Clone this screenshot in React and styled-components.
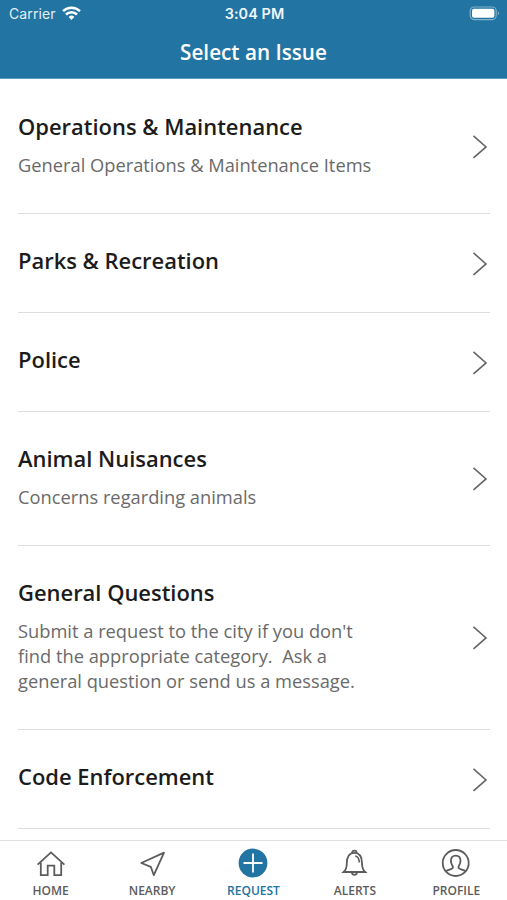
import React from 'react';
import styled, { createGlobalStyle } from 'styled-components';

const GlobalStyle = createGlobalStyle`
  * {
    box-sizing: border-box;
  }

  body {
    margin: 0;
    background: #fff;
    font-family: 'Open Sans', 'Noto Sans', sans-serif;
  }
`;

const Screen = styled.div`
  width: 507px;
  height: 900px;
  display: flex;
  flex-direction: column;
  overflow: hidden;
  background: #fff;
`;

const Header = styled.header`
  height: 79px;
  flex-shrink: 0;
  background: #2274a2;
  border-bottom: 1px solid #5d9cc1;
  color: #fff;
`;

const StatusBar = styled.div`
  height: 27px;
  padding: 0 7px 0 9px;
  display: grid;
  grid-template-columns: 1fr auto 1fr;
  align-items: center;
  font-family: Inter, 'Liberation Sans', sans-serif;
  font-size: 14px;
  line-height: 27px;
`;

const Carrier = styled.div`
  display: flex;
  align-items: center;
  gap: 6px;
  letter-spacing: 0.1px;
  color: #e3eff6;
`;

const Clock = styled.div`
  font-size: 14.4px;
  font-weight: 600;
  letter-spacing: 0.1px;
  color: #f0f7fb;
`;

const Battery = styled.div`
  display: flex;
  justify-content: flex-end;
`;

const HeaderTitle = styled.h1`
  margin: 0;
  padding-top: 10px;
  font-size: 20.7px;
  line-height: 30px;
  font-weight: 600;
  text-align: center;
`;

const IssueList = styled.main`
  flex: 1;
  min-height: 0;
  overflow: hidden;
  padding: 1px 17px 0 18px;
`;

const IssueRow = styled.div`
  display: flex;
  align-items: center;
  justify-content: space-between;
  padding: 32px 2px 31px 0;
  border-bottom: 1px solid #dedede;
`;

const IssueText = styled.div`
  padding-bottom: 5px;
`;

const IssueName = styled.h2`
  margin: 0;
  font-size: 21.95px;
  line-height: 30px;
  font-weight: 600;
  color: #1c1c1c;
`;

const IssueDescription = styled.p`
  width: 360px;
  margin: 10px 0 0;
  font-size: 18.3px;
  line-height: 25px;
  color: #6a6a6a;
  white-space: pre-line;
`;

const TabBar = styled.nav`
  height: 60px;
  flex-shrink: 0;
  display: grid;
  grid-template-columns: repeat(5, 1fr);
  border-top: 1px solid #e0e0e0;
  background: #fff;
`;

const Tab = styled.div`
  display: flex;
  flex-direction: column;
  align-items: center;
  padding-top: 5.5px;
  color: ${(props) => (props.$active ? '#2274a2' : '#5c5c5c')};
`;

const TabLabel = styled.span`
  margin-top: 4.5px;
  font-size: 12px;
  line-height: 16px;
  font-weight: 600;
`;

const TabIcon = styled.svg`
  width: 32px;
  height: 32px;
  fill: none;
  stroke: currentColor;
  stroke-width: 1.8;
`;

const WifiIcon = () => (
  <svg width="19" height="15" viewBox="0 0 19 15" fill="none" stroke="#fff" strokeWidth="2.5">
    <path d="M1 5.2a12.2 12.2 0 0 1 17 0" />
    <path d="M4 8.5a7.8 7.8 0 0 1 11 0" />
    <path d="M9.5 13.9 6.6 11a4.1 4.1 0 0 1 5.8 0z" fill="#fff" stroke="none" />
  </svg>
);

const BatteryIcon = () => (
  <svg width="31" height="15" viewBox="0 0 31 15">
    <rect x="1.2" y="1" width="26" height="12.6" rx="4" fill="none" stroke="#82b1cb" strokeWidth="1.2" />
    <rect x="3" y="2.8" width="22.4" height="9" rx="2" fill="#fff" />
    <path d="M28.8 5.3c1.7.7 1.7 3.3 0 4z" fill="#82b1cb" />
  </svg>
);

const Chevron = () => (
  <svg width="16" height="24" viewBox="0 0 16 24" fill="none" stroke="#666" strokeWidth="1.6">
    <path d="M1.5 0.9 14 11.9 1.5 22.9" />
  </svg>
);

const HomeIcon = () => (
  <TabIcon viewBox="0 0 32 32">
    <path d="M2.6 17.6 16 5.4l13.4 12.2" />
    <path d="M5.8 15.4v12.7h6.9v-9.4h6.6v9.4h6.9V15.4" />
  </TabIcon>
);

const NearbyIcon = () => (
  <TabIcon viewBox="0 0 32 32">
    <path d="M5.3 16 28 5.6 17.8 28.2 14.8 19.8z" strokeLinejoin="round" />
  </TabIcon>
);

const RequestIcon = () => (
  <TabIcon viewBox="0 0 32 32">
    <circle cx="16" cy="16" r="14.4" fill="currentColor" stroke="none" />
    <path d="M6.5 16h19M16 6.5v19" stroke="#fff" />
  </TabIcon>
);

const AlertsIcon = () => (
  <TabIcon viewBox="0 0 32 32">
    <path d="M4.6 25c2.6-2.3 3.2-4.8 3.2-8.8C7.8 9.4 10.5 5.8 15.4 5.800s7.600 3.600 7.600 10.400c0 4 .6 6.500 3.200 8.800z" />
    <path d="M13.2 5.9a2.2 2.2 0 0 1 4.4 0M12.9 25.3a2.5 2.5 0 0 0 5 0" />
    <path d="M16.2 9c2.8.4 4 3 4 6.5" strokeWidth="1.5" />
  </TabIcon>
);

const ProfileIcon = () => (
  <TabIcon viewBox="0 0 32 32">
    <circle cx="15.7" cy="16" r="13" />
    <path d="M5.8 24.2c2.8-1.8 7.2-1.9 7.2-3.900 0-1.700-2.100-2.600-2.100-6.500 0-3.500 1.900-5.200 4.800-5.200s4.800 1.700 4.800 5.200c0 3.900-2.100 4.800-2.100 6.500 0 2 4.400 2.100 7.200 3.900" />
  </TabIcon>
);

const issues = [
  { name: 'Operations & Maintenance', description: 'General Operations & Maintenance Items' },
  { name: 'Parks & Recreation' },
  { name: 'Police' },
  { name: 'Animal Nuisances', description: 'Concerns regarding animals' },
  {
    name: 'General Questions',
    description:
      "Submit a request to the city if you don't\nfind the appropriate category.\u00a0 Ask a\ngeneral question or send us a message."
  },
  { name: 'Code Enforcement' }
];

const tabs = [
  { label: 'HOME', Icon: HomeIcon },
  { label: 'NEARBY', Icon: NearbyIcon },
  { label: 'REQUEST', Icon: RequestIcon, active: true },
  { label: 'ALERTS', Icon: AlertsIcon },
  { label: 'PROFILE', Icon: ProfileIcon }
];

const App = () => (
  <>
    <GlobalStyle />
    <Screen>
      <Header>
        <StatusBar>
          <Carrier>
            Carrier
            <WifiIcon />
          </Carrier>
          <Clock>3:04 PM</Clock>
          <Battery>
            <BatteryIcon />
          </Battery>
        </StatusBar>
        <HeaderTitle>Select an Issue</HeaderTitle>
      </Header>
      <IssueList>
        {issues.map((issue) => (
          <IssueRow key={issue.name}>
            <IssueText>
              <IssueName>{issue.name}</IssueName>
              {issue.description && <IssueDescription>{issue.description}</IssueDescription>}
            </IssueText>
            <Chevron />
          </IssueRow>
        ))}
      </IssueList>
      <TabBar>
        {tabs.map(({ label, Icon, active }) => (
          <Tab key={label} $active={active}>
            <Icon />
            <TabLabel>{label}</TabLabel>
          </Tab>
        ))}
      </TabBar>
    </Screen>
  </>
);

export default App;
